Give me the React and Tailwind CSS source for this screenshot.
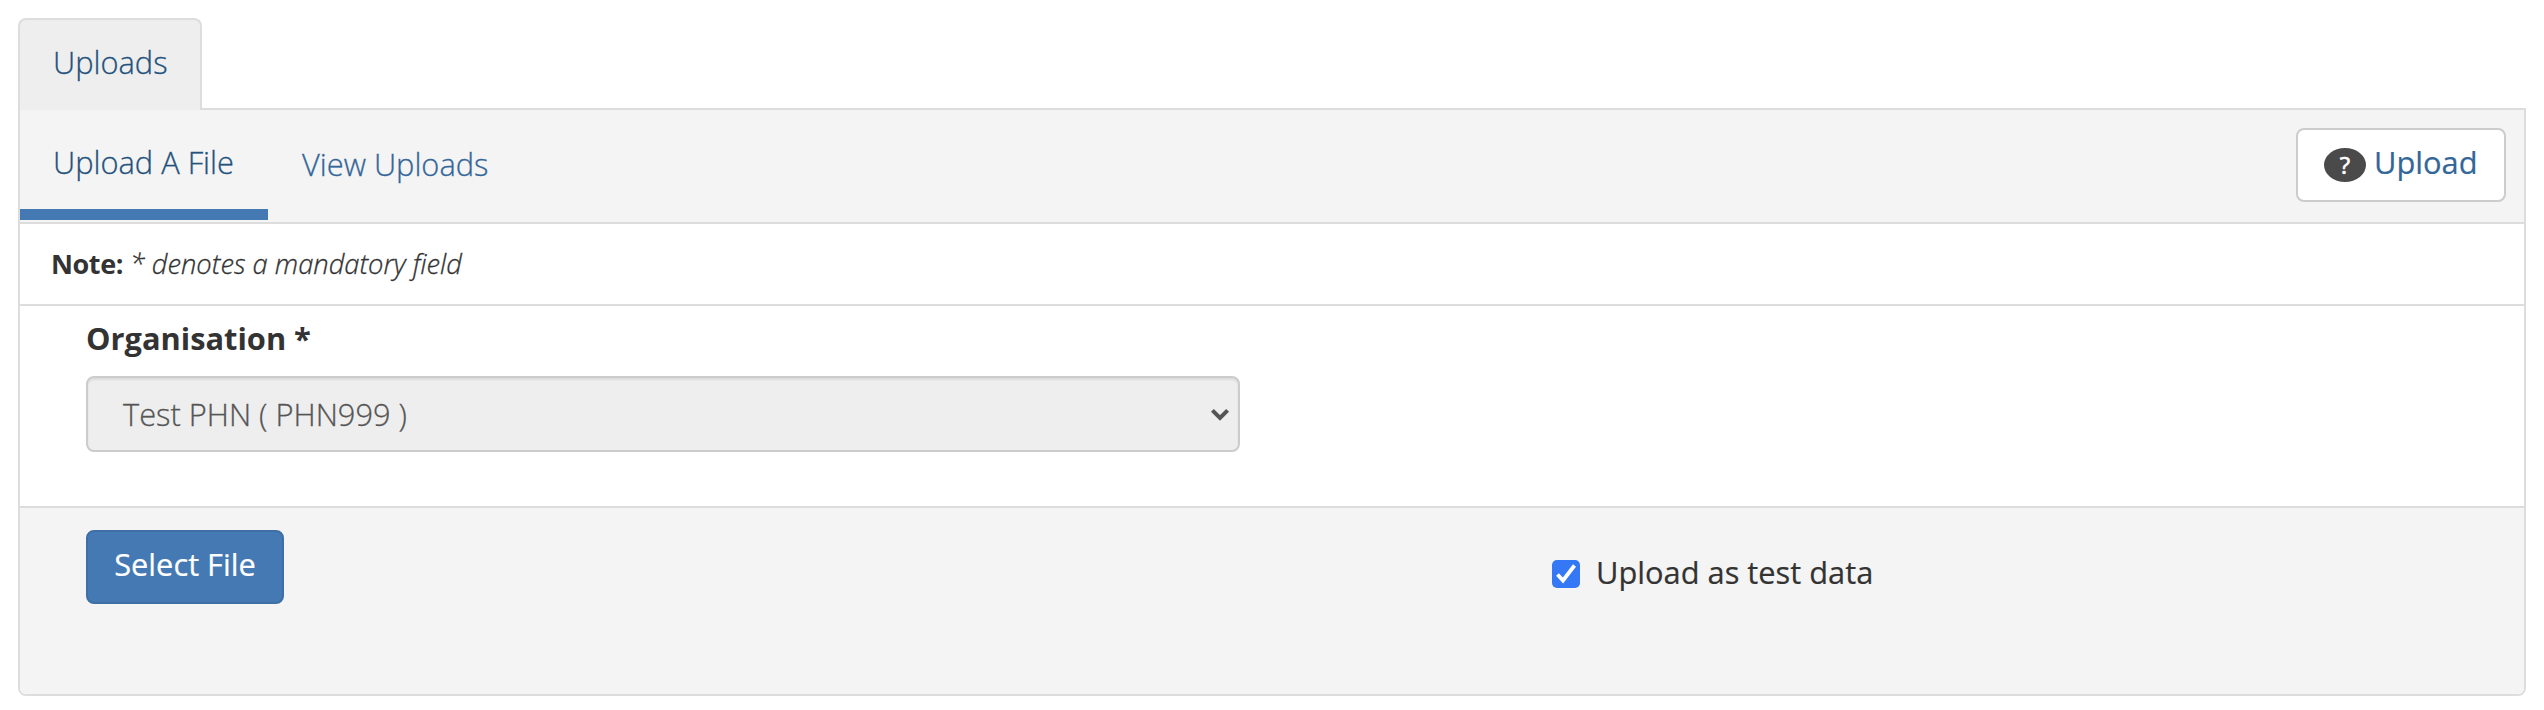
import React from 'react';

function Tab() {
  return (
    <div className="relative z-10 -mb-0.5 h-[92px] w-[184px] rounded-t-lg border-2 border-b-0 border-[#ddd] bg-[#eee] pl-[33px] pt-5 font-light text-[#23527c] [-webkit-text-stroke:0.3px]">
      Uploads
    </div>
  );
}

function SubNav() {
  return (
    <nav className="flex h-[114px] justify-between border-b-2 border-[#ddd] bg-[#f4f4f4] pr-[18px]">
      <div className="flex font-light [-webkit-text-stroke:0.3px]">
        <a className="h-[110px] w-[248px] border-b-[11px] border-[#4479b3] pl-[33px] pt-[30px] text-[#23527c]">Upload A File</a>
        <a className="pl-[34px] pt-8 text-[#336699]">View Uploads</a>
      </div>
      <button className="mt-[18px] flex h-[74px] w-[210px] items-start rounded-lg border-2 border-[#ccc] bg-white pl-[26px] font-normal text-[#336699] [-webkit-text-stroke:0.2px]">
        <span className="mt-[18px] flex h-[34px] w-[42px] items-center justify-center rounded-[50%] bg-[#4a4a4a] text-2xl font-medium text-white [-webkit-text-stroke:0.6px]">?</span>
        <span className="ml-[8px] mt-[10px]">Upload</span>
      </button>
    </nav>
  );
}

export default function App() {
  return (
    <main className="h-[710px] w-[2544px] whitespace-nowrap bg-white pl-[18px] pr-[18px] pt-[18px] font-['Open_Sans',sans-serif] text-[30.8px] leading-[44px] text-[#333]">
      <Tab />
      <section className="h-[588px] overflow-hidden rounded-b-lg border-2 border-[#ddd]">
        <SubNav />
        <p className="h-[82px] border-b-2 border-[#ddd] pl-[31px] pt-[18px] text-[27px]">
          <strong className="font-bold tracking-[-0.4px]">Note:</strong> <em className="text-[27.3px] font-light [-webkit-text-stroke:0.3px]">* denotes a mandatory field</em>
        </p>
        <div className="h-[202px] border-b-2 border-[#ddd] pl-[66px] pt-[10px]">
          <label className="block font-bold">Organisation *</label>
          <div className="mt-4 flex h-[76px] w-[1154px] items-start justify-between rounded-lg border-2 border-[#ccc] bg-[#eee] pl-[35px] pr-[9px] pt-[14px] font-light text-[#555] shadow-[inset_0_2px_2px_rgba(0,0,0,0.075)] [-webkit-text-stroke:0.3px]">
            <span>Test PHN ( PHN999 )</span>
            <svg className="mt-[17px] h-3 w-[18px]" viewBox="0 0 18 12" fill="none" stroke="#555" strokeWidth="4">
              <path d="M1.4 1.4 9 9 16.6 1.4" />
            </svg>
          </div>
        </div>
        <div className="flex h-[186px] items-start bg-[#f4f4f4] pl-[66px]">
          <button className="mt-[22px] h-[74px] w-[198px] rounded-lg border-2 border-[#3e6fa5] bg-[#4479b3] pb-1.5 text-white [-webkit-text-stroke:0.2px]">Select File</button>
          <label className="ml-[1268px] mt-[42px] flex [-webkit-text-stroke:0.2px]">
            <span className="mt-[10px] flex h-7 w-7 items-center justify-center rounded-[5px] bg-[#3478f6]">
              <svg className="h-7 w-7" viewBox="0 0 28 28" fill="none" stroke="#fff" strokeWidth="3.8">
                <path d="M5.5 14.5 11 20.5 22.5 5.5" />
              </svg>
            </span>
            <span className="ml-4">Upload as test data</span>
          </label>
        </div>
      </section>
    </main>
  );
}
